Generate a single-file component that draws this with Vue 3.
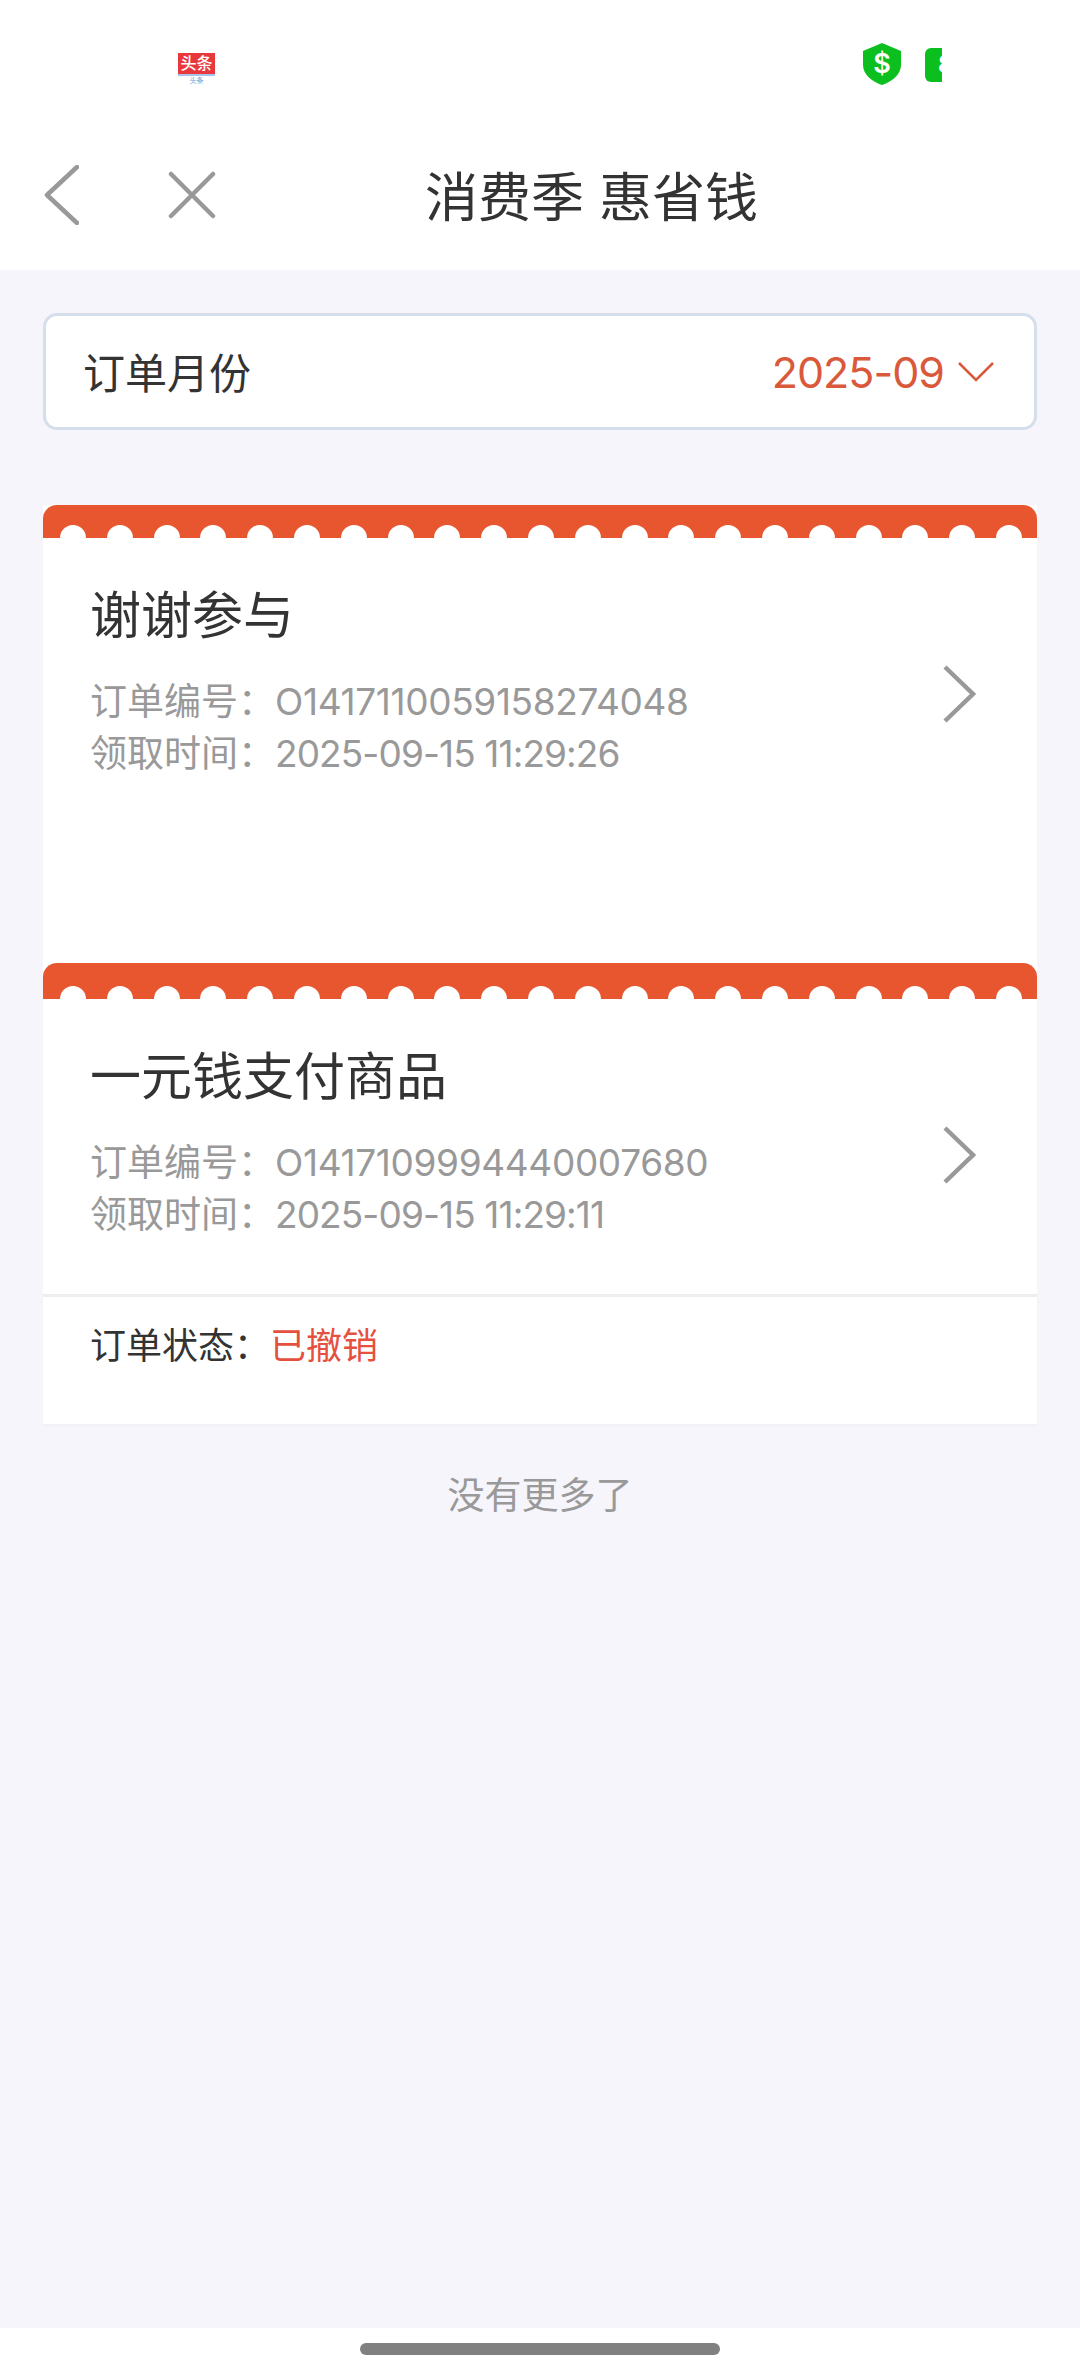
<template>
  <div class="page">
    <header class="header">
      <div class="status-bar">
        <div class="app-logo">
          <span class="logo-box">头条</span>
          <span class="logo-sub">头条</span>
        </div>
        <div class="status-right">
          <svg class="shield" viewBox="0 0 38 42">
            <path d="M19 0 L38 8 V22 C38 32 28 39 19 42 C10 39 0 32 0 22 V8 Z" fill="#0abf1e"/>
            <text x="19" y="30" text-anchor="middle" class="shield-text">$</text>
          </svg>
          <div class="battery"><span class="battery-num">8</span></div>
        </div>
      </div>
      <div class="nav">
        <svg class="nav-back" viewBox="0 0 36 60" fill="none" stroke="#999" stroke-width="4.5" stroke-linecap="round" stroke-linejoin="round">
          <path d="M34 2 L4 30 L34 58" />
        </svg>
        <svg class="nav-close" viewBox="0 0 48 48" fill="none" stroke="#999" stroke-width="4.5" stroke-linecap="round">
          <path d="M3 3 L45 45 M45 3 L3 45" />
        </svg>
        <div class="nav-title">消费季 惠省钱</div>
      </div>
    </header>

    <main class="content">
      <div class="month-box">
        <span class="month-label">订单月份</span>
        <span class="month-value">2025-09</span>
        <svg class="month-arrow" viewBox="0 0 36 20" fill="none" stroke="#d9593a" stroke-width="2.5">
          <path d="M1 1 L18 18 L35 1" />
        </svg>
      </div>

      <div class="orders">
        <div v-for="order in orders" :key="order.no" class="order-card">
          <div class="ticket-top">
            <span v-for="n in 21" :key="n" class="scallop"></span>
          </div>
          <div class="order-main" :class="{ tall: !order.status }">
            <div class="order-info">
              <div class="order-name">{{ order.name }}</div>
              <div class="order-line">订单编号：<span class="order-no">{{ order.no }}</span></div>
              <div class="order-line">领取时间：<span class="order-time">{{ order.time }}</span></div>
            </div>
            <svg class="order-arrow" viewBox="0 0 34 58" fill="none" stroke="#999" stroke-width="4.5">
              <path d="M3 2 L31 29 L3 56" />
            </svg>
          </div>
          <div v-if="order.status" class="order-status">
            订单状态：<span class="status-val">{{ order.status }}</span>
          </div>
        </div>
      </div>

      <div class="no-more">没有更多了</div>
    </main>

    <footer class="home-bar"><span class="home-pill"></span></footer>
  </div>
</template>

<script setup>
const orders = [
  { name: '谢谢参与', no: 'O1417110059158274048', time: '2025-09-15 11:29:26' },
  { name: '一元钱支付商品', no: 'O1417109994440007680', time: '2025-09-15 11:29:11', status: '已撤销' }
]
</script>

<style>
body {
  margin: 0;
}
</style>

<style scoped>
.page {
  width: 1080px;
  height: 2376px;
  display: flex;
  flex-direction: column;
  background: #f5f5fb;
  font-family: Inter, "Noto Sans CJK SC", sans-serif;
  color: #333;
  overflow: hidden;
}
.header {
  background: #fff;
  height: 270px;
  flex-shrink: 0;
}
.status-bar {
  height: 130px;
  display: flex;
  justify-content: space-between;
  padding: 43px 138px 0 178px;
  box-sizing: border-box;
}
.app-logo {
  width: 37px;
  display: flex;
  flex-direction: column;
  align-items: center;
  margin-top: 10px;
}
.logo-box {
  width: 37px;
  height: 21px;
  background: #e8383d;
  border-bottom: 2px solid #a9c4ea;
  color: #fff;
  font-size: 16px;
  line-height: 21px;
  text-align: center;
  font-weight: 500;
}
.logo-sub {
  font-size: 7px;
  line-height: 10px;
  color: #6f9fd8;
}
.status-right {
  display: flex;
  align-items: flex-start;
  gap: 24px;
}
.shield {
  width: 38px;
  height: 42px;
}
.shield-text {
  font-size: 27px;
  font-weight: 600;
  fill: #fff;
  font-family: Inter, sans-serif;
}
.battery {
  width: 17px;
  height: 34px;
  margin-top: 5px;
  background: #0abf1e;
  border-radius: 6px 0 0 6px;
  overflow: hidden;
  padding-left: 13px;
  box-sizing: border-box;
}
.battery-num {
  display: block;
  font-size: 24px;
  line-height: 34px;
  font-weight: 700;
  color: #fff;
}
.nav {
  height: 130px;
  display: flex;
  align-items: center;
  padding-left: 43px;
}
.nav-back {
  width: 36px;
  height: 60px;
}
.nav-close {
  width: 48px;
  height: 48px;
  margin-left: 89px;
}
.nav-title {
  font-size: 53px;
  margin-left: 209px;
  margin-top: -2px;
  color: #333;
  white-space: nowrap;
}
.content {
  flex: 1;
  padding: 43px 43px 0;
}
.month-box {
  height: 117px;
  box-sizing: border-box;
  border: 3px solid #d5dfeb;
  border-radius: 14px;
  background: #fff;
  display: flex;
  align-items: center;
  padding: 0 40px 0 37px;
}
.month-label {
  font-size: 42px;
  flex: 1;
  margin-top: -2px;
}
.month-value {
  font-size: 43px;
  letter-spacing: -1px;
  color: #d9593a;
}
.month-arrow {
  width: 36px;
  height: 20px;
  margin-left: 14px;
}
.orders {
  margin-top: 75px;
  display: flex;
  flex-direction: column;
}
.order-card {
  background: #fff;
}
.ticket-top {
  height: 33px;
  background: #e8562f;
  border-radius: 14px 14px 0 0;
  display: flex;
  align-items: flex-end;
  gap: 20.8px;
  padding-left: 17px;
}
.order-card + .order-card .ticket-top {
  height: 36px;
}
.scallop {
  width: 26px;
  height: 13px;
  background: #fff;
  border-radius: 13px 13px 0 0;
  flex-shrink: 0;
}
.order-main {
  display: flex;
  align-items: flex-start;
  justify-content: space-between;
  padding: 42px 61px 0 47px;
  height: 295px;
  box-sizing: border-box;
}
.order-main.tall {
  height: 425px;
}
.order-name {
  font-size: 51px;
  line-height: 72px;
  margin-bottom: 24px;
}
.order-line {
  font-size: 37px;
  line-height: 52px;
  color: #999;
}
.order-no {
  letter-spacing: -0.35px;
}
.order-time {
  letter-spacing: -0.9px;
}
.order-arrow {
  width: 34px;
  height: 58px;
  margin-top: 85px;
}
.order-status {
  border-top: 3px solid #eee;
  padding: 24px 0 0 47px;
  height: 103px;
  font-size: 36px;
  line-height: 50px;
  color: #333;
  box-shadow: 0 2px 2px rgba(0, 0, 0, 0.02);
}
.status-val {
  color: #e5503f;
}
.no-more {
  margin-top: 46px;
  text-align: center;
  font-size: 37px;
  line-height: 52px;
  color: #999;
}
.home-bar {
  height: 48px;
  background: #fff;
  display: flex;
  justify-content: center;
  align-items: center;
  flex-shrink: 0;
}
.home-pill {
  width: 360px;
  height: 12px;
  background: #808080;
  border-radius: 6px;
  margin-top: -6px;
}
</style>
